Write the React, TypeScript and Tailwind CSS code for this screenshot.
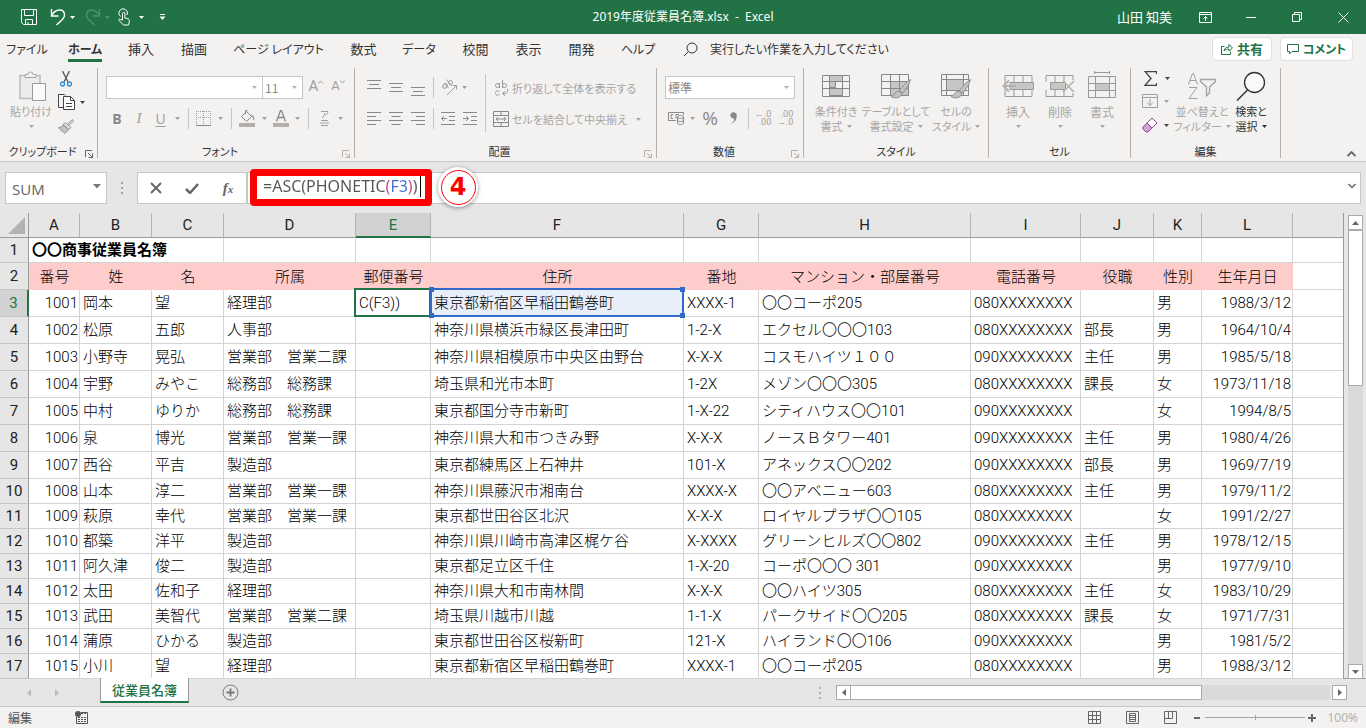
import type { ReactNode } from "react";
import clsx from "clsx";

const uiFont = "font-['Noto_Sans_CJK_JP',sans-serif] [font-feature-settings:'palt']";
const cellFont = "font-[Roboto,'Noto_Sans_CJK_JP',sans-serif] [font-feature-settings:normal]";

const tabs = [
  { label: "ファイル", width: "w-[54px]", size: "text-[12px]" },
  { label: "ホーム", width: "w-[62px]", size: "text-[12px]", active: true },
  { label: "挿入", width: "w-[50px]", size: "text-[13px]" },
  { label: "描画", width: "w-[56px]", size: "text-[13px]" },
  { label: "ページ レイアウト", width: "w-[113px]", size: "text-[12px]" },
  { label: "数式", width: "w-[57px]", size: "text-[13px]" },
  { label: "データ", width: "w-[54px]", size: "text-[12px]" },
  { label: "校閲", width: "w-[59px]", size: "text-[13px]" },
  { label: "表示", width: "w-[47px]", size: "text-[13px]" },
  { label: "開発", width: "w-[59px]", size: "text-[13px]" },
  { label: "ヘルプ", width: "w-[54px]", size: "text-[12px]" },
];

const columns = [
  { name: "A", width: "w-[51px]" },
  { name: "B", width: "w-[72px]" },
  { name: "C", width: "w-[72px]" },
  { name: "D", width: "w-[132px]" },
  { name: "E", width: "w-[75px]" },
  { name: "F", width: "w-[253px]" },
  { name: "G", width: "w-[75px]" },
  { name: "H", width: "w-[212px]" },
  { name: "I", width: "w-[110px]" },
  { name: "J", width: "w-[73px]" },
  { name: "K", width: "w-[48px]" },
  { name: "L", width: "w-[91px]" },
];

const fields = ["番号", "姓", "名", "所属", "郵便番号", "住所", "番地", "マンション・部屋番号", "電話番号", "役職", "性別", "生年月日"];

const employees = [
  ["1001", "岡本", "望", "経理部", "C(F3))", "東京都新宿区早稲田鶴巻町", "XXXX-1", "〇〇コーポ205", "080XXXXXXXX", "", "男", "1988/3/12"],
  ["1002", "松原", "五郎", "人事部", "", "神奈川県横浜市緑区長津田町", "1-2-X", "エクセル〇〇〇103", "080XXXXXXXX", "部長", "男", "1964/10/4"],
  ["1003", "小野寺", "晃弘", "営業部　営業二課", "", "神奈川県相模原市中央区由野台", "X-X-X", "コスモハイツ１００", "090XXXXXXXX", "主任", "男", "1985/5/18"],
  ["1004", "宇野", "みやこ", "総務部　総務課", "", "埼玉県和光市本町", "1-2X", "メゾン〇〇〇305", "080XXXXXXXX", "課長", "女", "1973/11/18"],
  ["1005", "中村", "ゆりか", "総務部　総務課", "", "東京都国分寺市新町", "1-X-22", "シティハウス〇〇101", "090XXXXXXXX", "", "女", "1994/8/5"],
  ["1006", "泉", "博光", "営業部　営業一課", "", "神奈川県大和市つきみ野", "X-X-X", "ノースＢタワー401", "090XXXXXXXX", "主任", "男", "1980/4/26"],
  ["1007", "西谷", "平吉", "製造部", "", "東京都練馬区上石神井", "101-X", "アネックス〇〇202", "090XXXXXXXX", "部長", "男", "1969/7/19"],
  ["1008", "山本", "淳二", "営業部　営業一課", "", "神奈川県藤沢市湘南台", "XXXX-X", "〇〇アベニュー603", "080XXXXXXXX", "主任", "男", "1979/11/2"],
  ["1009", "萩原", "幸代", "営業部　営業一課", "", "東京都世田谷区北沢", "X-X-X", "ロイヤルプラザ〇〇105", "080XXXXXXXX", "", "女", "1991/2/27"],
  ["1010", "都築", "洋平", "製造部", "", "神奈川県川崎市高津区梶ケ谷", "X-XXXX", "グリーンヒルズ〇〇802", "090XXXXXXXX", "主任", "男", "1978/12/15"],
  ["1011", "阿久津", "俊二", "製造部", "", "東京都足立区千住", "1-X-20", "コーポ〇〇〇 301", "090XXXXXXXX", "", "男", "1977/9/10"],
  ["1012", "太田", "佐和子", "経理部", "", "神奈川県大和市南林間", "X-X-X", "〇〇ハイツ305", "080XXXXXXXX", "主任", "女", "1983/10/29"],
  ["1013", "武田", "美智代", "営業部　営業二課", "", "埼玉県川越市川越", "1-1-X", "パークサイド〇〇205", "080XXXXXXXX", "課長", "女", "1971/7/31"],
  ["1014", "蒲原", "ひかる", "製造部", "", "東京都世田谷区桜新町", "121-X", "ハイランド〇〇106", "090XXXXXXXX", "", "男", "1981/5/2"],
  ["1015", "小川", "望", "経理部", "", "東京都新宿区早稲田鶴巻町", "XXXX-1", "〇〇コーポ205", "080XXXXXXXX", "", "男", "1988/3/12"],
];

type IconProps = { w: number; h: number; className?: string; children: ReactNode };

function Icon({ w, h, className, children }: IconProps) {
  return (
    <svg width={w} height={h} viewBox={`0 0 ${w} ${h}`} fill="none" stroke="currentColor" className={clsx("shrink-0", className)} aria-hidden="true">
      {children}
    </svg>
  );
}

function Caret({ className }: { className?: string }) {
  return (
    <Icon w={5} h={3} className={className}>
      <path d="M0 0h5L2.5 3z" fill="currentColor" stroke="none" />
    </Icon>
  );
}

type ToolProps = { label: string; width?: string; className?: string; children: ReactNode };

function Tool({ label, width = "w-[22px]", className, children }: ToolProps) {
  return (
    <button type="button" aria-label={label} className={clsx("flex shrink-0 items-center justify-center", width, className)}>
      {children}
    </button>
  );
}

function CaretTool({ label, width = "w-[11px]", className }: { label: string; width?: string; className?: string }) {
  return (
    <Tool label={label} width={width} className={className}>
      <Caret />
    </Tool>
  );
}

function Divider({ width = "w-[10px]" }: { width?: string }) {
  return (
    <span className={clsx("flex shrink-0 justify-center", width)}>
      <span className="h-[21px] w-px bg-[#c8c6c4]" />
    </span>
  );
}

type GroupProps = { title: string; width: string; launcher?: "dark" | "dim"; children: ReactNode };

function Group({ title, width, launcher, children }: GroupProps) {
  return (
    <section className={clsx("flex h-[90px] shrink-0 flex-col border-r border-[#b3b0ad]", width)}>
      <div className="h-[77px]">{children}</div>
      <div className="flex h-[13px] items-center">
        <h2 className="flex-1 whitespace-nowrap text-center text-[11px] leading-[13px] text-[#333]">{title}</h2>
        {launcher && (
          <button type="button" aria-label={`${title}の設定`} className={clsx("mr-1 mt-1", launcher === "dark" ? "text-[#666]" : "text-[#b3b0ad]")}>
            <Icon w={8} h={8}>
              <path d="M.5 7V.5H7M3 3l4 4M7.500 3.500v4h-4" />
            </Icon>
          </button>
        )}
      </div>
    </section>
  );
}

type DropProps = { label: string; value: string; width: string; className?: string };

function Drop({ label, value, width, className }: DropProps) {
  return (
    <div className={clsx("relative shrink-0", width)}>
      <select
        aria-label={label}
        defaultValue={value}
        className={clsx("block h-[23px] w-full appearance-none border border-[#c8c6c4] bg-white pl-0.5 text-[12px] leading-5 text-[#888]", className)}
      >
        <option>{value}</option>
      </select>
      <Caret className="pointer-events-none absolute right-1.5 top-2.5 text-[#b3b0ad]" />
    </div>
  );
}

type BigButtonProps = { icon: ReactNode; lines: string[]; width: string; size?: string; color?: string };

function BigButton({ icon, lines, width, size = "text-[11px]", color }: BigButtonProps) {
  const single = lines.length === 1;
  return (
    <button type="button" className={clsx("flex shrink-0 flex-col items-center whitespace-nowrap leading-[15px]", width, size, color)}>
      <span className="flex h-9 items-center justify-center">{icon}</span>
      <span>{lines[0]}</span>
      {single ? (
        <Caret className="mt-1.5" />
      ) : (
        <span className="flex items-center gap-1">
          {lines[1]}
          <Caret />
        </span>
      )}
    </button>
  );
}

function TitleBar() {
  return (
    <header className="flex h-[34px] items-center bg-[#217346] text-[13px] text-white">
      <div className="flex flex-1 items-center">
        <Tool label="上書き保存" className="ml-[18px]">
          <Icon w={16} h={16}>
            <path d="M.5.5h15v15h-13l-2-2zM3.500.5v6h9v-6M4.500 15.500v-5h7v5M7 13v2.500" />
          </Icon>
        </Tool>
        <Tool label="元に戻す" width="w-6" className="ml-1.5">
          <Icon w={16} h={18}>
            <path d="M1.500 1v7h7M1.500 8c2-4 5-6 8-6 3 0 5 2 5 5 0 4-4 6-8 10" strokeWidth="1.400" />
          </Icon>
        </Tool>
        <CaretTool label="元に戻すの一覧" width="w-[5px]" />
        <Tool label="やり直し" width="w-6" className="ml-1.5 text-[#4d9069]">
          <Icon w={16} h={18}>
            <path d="M14.500 1v7h-7M14.500 8c-2-4-5-6-8-6-3 0-5 2-5 5 0 4 4 6 8 10" strokeWidth="1.400" />
          </Icon>
        </Tool>
        <CaretTool label="やり直しの一覧" width="w-[5px]" className="text-[#4d9069]" />
        <Tool label="タッチ/マウス モードの切り替え" width="w-6" className="ml-0.5">
          <Icon w={12} h={18}>
            <path d="M2.500 8.500A4.300 4.300 0 1 1 9 7M4.500 12V5.500a1.200 1.200 0 0 1 2.400 0V10l3 .8c1 .3 1.600.8 1.500 2l-.8 4.200H5.500L1 12.500c-.6-1 .6-1.800 1.500-1z" />
          </Icon>
        </Tool>
        <CaretTool label="モードの一覧" />
        <Tool label="クイック アクセス ツール バーのユーザー設定" width="w-[30px]">
          <Icon w={7} h={6}>
            <path d="M1 .5h5" />
            <path d="M.5 2.500h6l-3 3.500z" fill="currentColor" stroke="none" />
          </Icon>
        </Tool>
      </div>
      <h1 className="whitespace-pre font-['Noto_Sans','Noto_Sans_CJK_JP',sans-serif] text-[12px] leading-4">2019年度従業員名簿.xlsx  -  Excel</h1>
      <div className="flex flex-1 items-center justify-end">
        <span className="mr-2.5 whitespace-nowrap">山田 知美</span>
        <Tool label="リボンの表示オプション" width="w-[46px]">
          <Icon w={13} h={11}>
            <path d="M.5.5h12v10H.5zM.5 2.500h12M6.500 9V4.500M4.500 6.500l2-2 2 2" />
          </Icon>
        </Tool>
        <Tool label="最小化" width="w-[46px]">
          <Icon w={10} h={1}>
            <path d="M0 .5h10" />
          </Icon>
        </Tool>
        <Tool label="元に戻す (縮小)" width="w-[46px]">
          <Icon w={10} h={10}>
            <path d="M.5 2.500h7v7h-7zM2.500 2.500v-2h7v7h-2" />
          </Icon>
        </Tool>
        <Tool label="閉じる" width="w-[46px]">
          <Icon w={11} h={11}>
            <path d="M.5.5l10 10M10.500.5l-10 10" />
          </Icon>
        </Tool>
      </div>
    </header>
  );
}

function TabRow() {
  return (
    <nav className="flex h-[30px] items-center leading-5 text-[#333]">
      {tabs.map((tab) => (
        <button
          key={tab.label}
          type="button"
          className={clsx("flex h-full shrink-0 items-center justify-center whitespace-nowrap", tab.width, tab.size, tab.active && "font-bold")}
        >
          <span className={clsx("border-b-[3px] pt-0.5", tab.active ? "border-[#217346]" : "border-transparent")}>{tab.label}</span>
        </button>
      ))}
      <button type="button" className="ml-[18px] flex items-center gap-3 whitespace-nowrap text-[12px]">
        <Icon w={15} h={15}>
          <circle cx="9" cy="6" r="5" />
          <path d="M5.500 9.500L1 14" />
        </Icon>
        実行したい作業を入力してください
      </button>
      <div className="ml-auto mr-[13px] flex gap-2 font-bold text-[#217346]">
        <button type="button" className="flex h-6 w-[60px] items-center justify-center gap-1 rounded-sm border border-[#e1dfdd] bg-white text-[13px]">
          <Icon w={12} h={12}>
            <path d="M3.500 3.500h-3v8h9v-3M3 8c.5-3 2.500-4 5-4V1.500L11.500 5 8 8V6C6 6 4.500 6.500 3 8z" />
          </Icon>
          共有
        </button>
        <button type="button" className="flex h-6 w-[73px] items-center justify-center gap-1 whitespace-nowrap rounded-sm border border-[#e1dfdd] bg-white text-[12px]">
          <Icon w={12} h={11}>
            <path d="M.5.500h11v7H5l-2.500 2.500V7.500h-2z" />
          </Icon>
          コメント
        </button>
      </div>
    </nav>
  );
}

function ClipboardGroup() {
  return (
    <Group title="クリップボード" width="w-[98px]" launcher="dark">
      <div className="flex pl-1.5">
        <BigButton
          width="w-[50px]"
          color="text-[#a8a6a4]"
          lines={["貼り付け"]}
          icon={
            <Icon w={28} h={30} className="ml-1">
              <path d="M1 4.500h20v23H1z" fill="#ececec" stroke="#bdbbb9" strokeWidth="1.500" />
              <path d="M6 6.500v-3h3a2.500 2.500 0 0 1 5 0h3v3z" fill="#f3f2f1" />
              <path d="M13.500 12.500h13v17h-13z" fill="#fafafa" stroke="#999" />
            </Icon>
          }
        />
        <div className="-ml-px flex flex-col pt-0.5">
          <Tool label="切り取り" className="h-[18px]">
            <Icon w={12} h={16}>
              <path d="M2.500 0l5.500 11M9.500 0L4 11" stroke="#555" strokeWidth="1.300" />
              <circle cx="2.500" cy="13" r="2" stroke="#2b88d8" strokeWidth="1.300" />
              <circle cx="9.500" cy="13" r="2" stroke="#2b88d8" strokeWidth="1.300" />
            </Icon>
          </Tool>
          <div className="flex h-7 items-center text-[#444]">
            <Tool label="コピー">
              <Icon w={17} h={16}>
                <path d="M6 13.500H.5V.5h6l1 1" />
                <path d="M5.500 2.500h7l4 4v9h-11z" fill="#fff" />
                <path d="M12.500 2.500v4h4M8 9.500h6M8 12.500h6" />
              </Icon>
            </Tool>
            <CaretTool label="コピーの種類" />
          </div>
          <Tool label="書式のコピー/貼り付け" className="h-5 text-[#999]">
            <Icon w={16} h={15}>
              <path d="M14.500.5l1 1.500-4 4-1.500-1.500zM7.500 3.500l5.500 5-2 2L5 5.500z" fill="#ddd" />
              <path d="M5 6l5.500 5L7 14.500C5 13 2.500 11.500.5 8.500 2.500 8.500 4 7.500 5 6z" fill="#c4c2c0" />
            </Icon>
          </Tool>
        </div>
      </div>
    </Group>
  );
}

function FontGroup() {
  return (
    <Group title="フォント" width="w-[257px]" launcher="dim">
      <div className="flex flex-col pl-2 text-[#a19f9d]">
        <div className="mt-2 flex h-[23px]">
          <Drop label="フォント名" value="" width="w-[157px]" />
          <Drop label="フォント サイズ" value="11" width="w-[40px]" className="border-l-0" />
          <Tool label="フォント サイズの拡大" className="ml-0.5 h-5">
            <span className="font-[Roboto] text-[15px]">A</span>
            <Icon w={5} h={4} className="mb-2">
              <path d="M.5 3.500l2-2.500 2 2.500" />
            </Icon>
          </Tool>
          <Tool label="フォント サイズの縮小" className="h-5">
            <span className="font-[Roboto] text-[13px]">A</span>
            <Icon w={5} h={4} className="mb-2">
              <path d="M.5.500l2 2.500 2-2.500" />
            </Icon>
          </Tool>
        </div>
        <div className="mt-[7px] flex h-6 items-center font-['Open_Sans'] text-[14px]">
          <Tool label="太字">
            <span className="font-bold text-[#8a8886]">B</span>
          </Tool>
          <Tool label="斜体">
            <span className="font-['Liberation_Serif'] text-[15px] italic">I</span>
          </Tool>
          <Tool label="下線" width="w-[21px]">
            <span className="underline underline-offset-2">U</span>
          </Tool>
          <CaretTool label="下線の種類" width="w-[13px]" />
          <Divider width="w-2" />
          <Tool label="罫線" width="w-[23px]">
            <Icon w={15} h={15}>
              <path d="M.5 0v13M7.500 0v13M14.500 0v13M0 .5h15M0 6.500h15" strokeDasharray="1 1" />
              <path d="M0 14.500h15" stroke="#888" />
            </Icon>
          </Tool>
          <CaretTool label="罫線の種類" />
          <Divider />
          <Tool label="塗りつぶしの色">
            <Icon w={16} h={17}>
              <path d="M7.500 1.500l5 5-5 5-5-5zM6.500 4V1a1 1 0 0 1 2 0" stroke="#8a8886" />
              <path d="M12.500 5c2 1 2.500 3 2 5" strokeWidth="1.500" />
              <path d="M0 15h16" stroke="#b3aeaa" strokeWidth="4" />
            </Icon>
          </Tool>
          <CaretTool label="塗りつぶしの色の一覧" width="w-3" />
          <Tool label="フォントの色">
            <Icon w={16} h={17}>
              <path d="M3.500 11.500l4-11h1l4 11M5 7.500h6" strokeWidth="1.300" stroke="#8a8886" />
              <path d="M0 15h16" stroke="#b3aeaa" strokeWidth="4" />
            </Icon>
          </Tool>
          <CaretTool label="フォントの色の一覧" />
          <Divider />
          <Tool label="ふりがなの表示">
            <Icon w={9} h={17}>
              <path d="M1 1.500h7c0 2-1 3-2.500 3.500M4.500 3c0 2-.5 4-2.500 5M1 10.500h7M0 13h9M1 15.500h7" />
            </Icon>
          </Tool>
          <CaretTool label="ふりがなの設定" />
        </div>
      </div>
    </Group>
  );
}

function Lines({ d }: { d: string }) {
  return (
    <Icon w={14} h={17} className="text-[#8a8886]">
      <path d={d} />
    </Icon>
  );
}

function AlignGroup() {
  return (
    <Group title="配置" width="w-[302px]" launcher="dim">
      <div className="flex pl-2 text-[#a19f9d]">
        <div className="pt-[7px]">
          <div className="flex h-6 items-center">
            <Tool label="上揃え">
              <Lines d="M0 1.500h14M2 5.500h10M0 9.500h14" />
            </Tool>
            <Tool label="上下中央揃え">
              <Lines d="M0 4.500h14M2 8.500h10M0 12.500h14" />
            </Tool>
            <Tool label="下揃え">
              <Lines d="M0 8.500h14M2 12.500h10M0 16.500h14" />
            </Tool>
            <Divider width="w-2" />
            <Tool label="方向" width="w-6">
              <Icon w={17} h={17}>
                <path d="M6 16L15.500 6.500M11.500 6.500h4v4" />
                <ellipse cx="4" cy="7" rx="2.500" ry="2" transform="rotate(-45 4 7)" />
                <path d="M4 4.500l3.500 4.500M5.500.5l5 6.500" />
                <circle cx="9.500" cy="3.500" r="2" />
              </Icon>
            </Tool>
            <CaretTool label="方向の一覧" width="w-1.5" />
          </div>
          <div className="mt-[7px] flex h-6 items-center">
            <Tool label="左揃え">
              <Lines d="M0 2.500h14M0 6.500h9M0 10.500h14M0 14.500h9" />
            </Tool>
            <Tool label="中央揃え">
              <Lines d="M0 2.500h14M2.500 6.500h9M0 10.500h14M2.500 14.500h9" />
            </Tool>
            <Tool label="右揃え">
              <Lines d="M0 2.500h14M5 6.500h9M0 10.500h14M5 14.500h9" />
            </Tool>
            <Divider width="w-2" />
            <Tool label="インデントを減らす">
              <Lines d="M0 2.500h14M8 6.500h6M8 10.500h6M0 14.500h14M6 8.500H.5M3 6L.5 8.500 3 11" />
            </Tool>
            <Tool label="インデントを増やす">
              <Lines d="M0 2.500h14M8 6.500h6M8 10.500h6M0 14.500h14M0 8.500h5.500M3 6l2.500 2.500L3 11" />
            </Tool>
          </div>
        </div>
        <span className="ml-1 mt-1.5 h-[58px] w-px bg-[#c8c6c4]" />
        <div className="ml-[7px] whitespace-nowrap pt-2 text-[11px] text-[#a8a6a4]">
          <button type="button" className="flex h-6 items-center gap-[3px]">
            <Icon w={16} h={17} className="text-[#999]">
              <circle cx="4.500" cy="5.500" r="2" />
              <path d="M6.500 3v5M9.500 0v8M6.500 11.500c-3-1.500-4 0-4 1.500s1 3 4 1.500M14.500 9v2.500c0 1.500-1 2-5 2M12 11l-2.500 2.500L12 16" />
              <circle cx="11.500" cy="5.500" r="2" />
            </Icon>
            折り返して全体を表示する
          </button>
          <button type="button" className="mt-[7px] flex h-6 items-center gap-[3px]">
            <Icon w={16} h={16} className="text-[#8a8886]">
              <path d="M.5.5h15v15H.5zM.5 4.500h15M.5 11.500h15M8 .5v4M8 11.500v4M3 8h10M5 6L3 8l2 2M11 6l2 2-2 2" />
            </Icon>
            セルを結合して中央揃え
            <Caret className="ml-1.5" />
          </button>
        </div>
      </div>
    </Group>
  );
}

function NumberGroup() {
  return (
    <Group title="数値" width="w-[147px]" launcher="dim">
      <div className="flex flex-col px-2 pt-2 text-[#a19f9d]">
        <Drop label="表示形式" value="標準" width="w-full" />
        <div className="mt-[7px] flex h-6 items-center">
          <Tool label="通貨表示形式">
            <Icon w={17} h={14} className="text-[#8a8886]">
              <path d="M8 9.500H.5v-8h15V4M5 3.500H3v4h2M8 7.500v-4h3" />
              <path d="M9.500 6v6c0 2 6 2 6 0V6c0-2-6-2-6 0zm0 0c0 2 6 2 6 0M9.500 9c0 2 6 2 6 0" fill="#eee" />
            </Icon>
          </Tool>
          <CaretTool label="通貨の一覧" />
          <Tool label="パーセント スタイル" width="w-6">
            <span className="font-['Open_Sans'] text-[19px] leading-6 text-[#8a8886]">%</span>
          </Tool>
          <Tool label="桁区切りスタイル">
            <Icon w={8} h={12} className="text-[#8a8886]">
              <path d="M1 12c3-1.500 4.500-3 4-5.500A3.200 3.200 0 1 1 7.700 4C8 8 5 11 1 12z" fill="currentColor" stroke="none" />
            </Icon>
          </Tool>
          <Divider width="w-2" />
          <Tool label="小数点以下の表示桁数を増やす">
            <span className="text-right font-[Roboto] text-[9px] leading-[8px]">←.0<br />.00</span>
          </Tool>
          <Tool label="小数点以下の表示桁数を減らす">
            <span className="text-right font-[Roboto] text-[9px] leading-[8px]">.00<br />→.0</span>
          </Tool>
        </div>
      </div>
    </Group>
  );
}

function Brush() {
  return <path d="M29.500 7.500c-4 2-8 7-11 11l3 3c3-4 7-9 8-14zM18 19c-4 0-4 4-8 5.500 4 2.500 10 1.500 11-3z" fill="#c4c2c0" stroke="#8f8d8b" />;
}

function StyleGroup() {
  return (
    <Group title="スタイル" width="w-[185px]">
      <div className="flex pl-1 text-[#a8a6a4]">
        <BigButton
          width="w-14"
          lines={["条件付き", "書式"]}
          icon={
            <Icon w={28} h={28} className="text-[#8a8886]">
              <path d="M7.500 3.500h13v6h-13zM7.500 9.500h6v6h-6zM7.500 16.500h13v7h-13z" fill="#c8c6c4" />
              <path d="M.5 3.500h27v21H.5zM.5 9.500h27M.5 16.500h27M7.500 3v21M20.500 3v21" />
            </Icon>
          }
        />
        <BigButton
          width="w-16"
          lines={["テーブルとして", "書式設定"]}
          icon={
            <Icon w={31} h={28} className="text-[#8a8886]">
              <path d="M9.500 9.500h18v14h-18z" fill="#c8c6c4" />
              <path d="M.5 2.500h27v21H.5zM.5 9.500h27M.5 16.500h27M9.500 2v21M18.500 2v21" />
              <Brush />
            </Icon>
          }
        />
        <BigButton
          width="w-14"
          lines={["セルの", "スタイル"]}
          icon={
            <Icon w={31} h={28} className="text-[#8a8886]">
              <path d="M5.500 7.500h17v11h-17z" fill="#c8c6c4" />
              <path d="M.5 2.500h27v21H.5zM.5 7.500h27M.5 18.500h27M5.500 2v21M22.500 2v21" />
              <Brush />
            </Icon>
          }
        />
      </div>
    </Group>
  );
}

function CellGroup() {
  return (
    <Group title="セル" width="w-[142px]">
      <div className="flex pl-2 text-[#a8a6a4]">
        <BigButton
          width="w-[42px]"
          size="text-[12px]"
          lines={["挿入"]}
          icon={
            <Icon w={32} h={28} className="text-[#999]">
              <path d="M3 3.500h27v21H3zM12 3v21M21 3v21" />
              <path d="M8 10.500h23.500v7H8z" fill="#c8c6c4" />
              <path d="M14 14H1.500M7 8.500L1.500 14 7 19.500" stroke="#b3b0ad" strokeWidth="2" />
            </Icon>
          }
        />
        <BigButton
          width="w-[42px]"
          size="text-[12px]"
          lines={["削除"]}
          icon={
            <Icon w={30} h={28} className="text-[#999]">
              <path d="M1 10V3.500h27V8M1 18v6.500h27V21M10 3v7M19 3v7M10 18v6M19 18v6" />
              <path d="M5.500 10.500h15v7h-15z" fill="#c8c6c4" />
              <path d="M18 9l11 11M29 9L18 20" stroke="#b3b0ad" strokeWidth="1.500" />
            </Icon>
          }
        />
        <BigButton
          width="w-[42px]"
          size="text-[12px]"
          lines={["書式"]}
          icon={
            <Icon w={28} h={32} className="text-[#999]">
              <path d="M.5 6.500h27v21H.5zM.5 13.500h27M.5 20.500h27M7.500 6v21M21.500 6v21M6.500 1v3M21.500 1v3M6.500 2.500h15" />
              <path d="M7.500 13.500h14v7h-14z" fill="#c8c6c4" />
            </Icon>
          }
        />
      </div>
    </Group>
  );
}

function EditGroup() {
  return (
    <Group title="編集" width="w-[150px]">
      <div className="flex pl-2">
        <div className="flex w-[34px] shrink-0 flex-col text-[#444]">
          <div className="flex h-[21px] items-center">
            <Tool label="合計">
              <Icon w={13} h={15}>
                <path d="M12.500 3V.5H1L7 7.500.8 14.500h11.700V12" strokeWidth="1.300" />
              </Icon>
            </Tool>
            <CaretTool label="集計の種類" width="w-3" />
          </div>
          <div className="flex h-6 items-center text-[#a19f9d]">
            <Tool label="フィル">
              <Icon w={16} h={14}>
                <path d="M.5.5h15v13H.5zM.5 3.500h15M8 5v6.500M5 8.500l3 3 3-3" />
              </Icon>
            </Tool>
            <CaretTool label="フィルの種類" />
          </div>
          <div className="flex h-6 items-center">
            <Tool label="クリア">
              <Icon w={16} h={16} className="text-[#9b3fa5]">
                <path d="M10 1l5 5-5 5-5-5z" fill="#fff" />
                <path d="M5 6l5 5-4 4H4L1 12v-2z" fill="#d3a3d8" />
              </Icon>
            </Tool>
            <CaretTool label="クリアの種類" />
          </div>
        </div>
        <BigButton
          width="w-[58px]"
          color="text-[#a8a6a4]"
          lines={["並べ替えと", "フィルター"]}
          icon={
            <Icon w={28} h={28} className="text-[#a3a19f]">
              <path d="M.5 12.500l4-11h1l4 11M2 8.500h6M1 15.500h8l-8 11h8.500" />
              <path d="M12.500 7.500h15v2L21.500 15v6l-3 3v-9l-6-5.500z" strokeWidth="1.300" />
            </Icon>
          }
        />
        <BigButton
          width="w-[40px]"
          color="text-[#333]"
          lines={["検索と", "選択"]}
          icon={
            <Icon w={30} h={30}>
              <circle cx="18.500" cy="11.500" r="10" fill="#fafafa" strokeWidth="1.300" />
              <path d="M11.500 19L1 29.500" strokeWidth="1.500" />
            </Icon>
          }
        />
      </div>
    </Group>
  );
}

function FormulaBar() {
  return (
    <div className="flex items-center border-t border-[#c6c6c6] bg-[#e6e6e6] px-[5px] pb-[9px] pt-[10px]">
      <div className="relative">
        <input
          aria-label="名前ボックス"
          defaultValue="SUM"
          className="block h-8 w-[102px] border border-[#c6c6c6] bg-white pl-1.5 pt-0.5 font-['Open_Sans'] text-[15px] text-[#666]"
        />
        <button type="button" aria-label="名前の一覧" className="absolute right-1.5 top-3 text-[#777]">
          <svg width="8" height="5" viewBox="0 0 8 5" aria-hidden="true">
            <path d="M0 0h8L4 4.500z" fill="currentColor" />
          </svg>
        </button>
      </div>
      <span className="flex w-[30px] justify-center text-[#a0a0a0]">
        <Icon w={2} h={12}>
          <path d="M1 0v12" strokeWidth="2" strokeDasharray="2 3" />
        </Icon>
      </span>
      <div className="flex h-8 w-[110px] items-center justify-center border border-[#c6c6c6] bg-white text-[#666]">
        <Tool label="キャンセル" width="w-9">
          <Icon w={12} h={12}>
            <path d="M1 1l10 10M11 1L1 11" strokeWidth="2" />
          </Icon>
        </Tool>
        <Tool label="入力" width="w-9">
          <Icon w={14} h={11}>
            <path d="M1 6l4 4L13 1" strokeWidth="2.500" />
          </Icon>
        </Tool>
        <Tool label="関数の挿入" width="w-9">
          <span className="font-['Liberation_Serif'] text-[15px] font-bold italic leading-5">
            f<span className="text-[11px]">x</span>
          </span>
        </Tool>
      </div>
      <div className="relative flex h-8 flex-1 items-center border border-[#c6c6c6] bg-white pb-1 pl-[15px]">
        <input
          aria-label="数式バー"
          defaultValue="=ASC(PHONETIC(F3))"
          className="w-[157px] bg-[linear-gradient(90deg,#555_0_122px,#c0478f_122px_127px,#3b6fd1_127px_145px,#c0478f_145px_150px,#555_150px)] bg-clip-text font-['Noto_Sans',sans-serif] text-[16px] leading-6 text-transparent"
        />
        <span className="h-[22px] w-px bg-black" />
        <div className="pointer-events-none absolute left-[2px] top-[-4px] h-[37px] w-[182px] rounded border-[7px] border-[#fe0000]" />
        <div className="absolute left-[190px] top-[-6px] flex size-10 items-center justify-center rounded-full bg-white shadow-[0_1px_4px_rgba(0,0,0,0.4)]">
          <span className="flex size-[35px] items-center justify-center rounded-full border border-[#fe0000] font-['DejaVu_Sans'] text-[24px] font-bold leading-8 text-[#fe0000]">
            4
          </span>
        </div>
        <button type="button" aria-label="数式バーの展開" className="ml-auto mr-1 text-[#666]">
          <Icon w={8} h={6}>
            <path d="M.5 1L4 4.500 7.500 1" strokeWidth="1.500" />
          </Icon>
        </button>
      </div>
    </div>
  );
}

function Handles() {
  const spots = ["left-[-3px] top-[-3px]", "right-[-3px] top-[-3px]", "left-[-3px] bottom-[-3px]", "right-[-3px] bottom-[-3px]"];
  return (
    <span className="pointer-events-none absolute -left-px -top-0.5 bottom-[-1px] right-[-1px] border-2 border-[#3369c9]">
      {spots.map((spot) => (
        <span key={spot} className={clsx("absolute size-[5px] bg-[#3369c9]", spot)} />
      ))}
    </span>
  );
}

function Sheet() {
  return (
    <table className={clsx("w-full table-fixed border-separate border-spacing-0 border-r border-[#9b9b9b] bg-white text-[15px] leading-5 text-black", cellFont)}>
      <colgroup>
        <col className="w-[29px]" />
        {columns.map((column) => (
          <col key={column.name} className={column.width} />
        ))}
        <col />
      </colgroup>
      <thead>
        <tr className="h-[25px] bg-[#e6e6e6]">
          <th aria-label="すべて選択" className="border-b border-r border-[#9b9b9b] p-0">
            <svg width="17" height="17" viewBox="0 0 17 17" className="ml-auto mr-[3px]" aria-hidden="true">
              <path d="M17 0v17H0z" fill="#b2b2b2" />
            </svg>
          </th>
          {columns.map(({ name }) => (
            <th
              key={name}
              scope="col"
              className={clsx(
                "border-r border-r-[#b4b4b4] p-0 font-normal",
                name === "E" ? "border-b-2 border-b-[#217346] bg-[#d2d2d2] text-[#217346]" : "border-b border-b-[#9b9b9b] text-[#222]",
              )}
            >
              {name}
            </th>
          ))}
          <th aria-label="M" className="border-b border-[#9b9b9b] p-0" />
        </tr>
      </thead>
      <tbody className="font-light">
        <tr className="h-[25px]">
          <RowNumber n={1} />
          <td colSpan={3} className="border-b border-r border-[#d4d4d4] p-0 pl-[3px] font-bold">
            〇〇商事従業員名簿
          </td>
          {columns.slice(3).map(({ name }) => (
            <td key={name} className="border-b border-r border-[#d4d4d4] p-0" />
          ))}
          <td className="border-b border-[#d4d4d4] p-0" />
        </tr>
        <tr className="h-[27px]">
          <RowNumber n={2} />
          {fields.map((field) => (
            <td key={field} className="whitespace-nowrap bg-[#ffcccc] p-0 text-center">
              {field}
            </td>
          ))}
          <td className="border-b border-[#d4d4d4] p-0" />
        </tr>
        {employees.map((employee, index) => {
          const n = index + 3;
          return (
            <tr key={n} className={n < 10 ? "h-[27px]" : "h-[25px]"}>
              <RowNumber n={n} />
              {employee.map((value, i) => {
                const { name } = columns[i];
                const editing = n === 3 && name === "E";
                const source = n === 3 && name === "F";
                return (
                  <td
                    key={name}
                    className={clsx(
                      "whitespace-nowrap border-b border-r border-[#d4d4d4] p-0",
                      name === "A" || name === "L" ? "pr-px text-right" : "pl-[3px]",
                      (editing || source) && "relative",
                      source && "bg-[#e8effa]",
                    )}
                  >
                    {value}
                    {editing && <span className="pointer-events-none absolute -left-0.5 -top-0.5 bottom-[-1px] right-[-1px] border-2 border-[#217346]" />}
                    {source && <Handles />}
                  </td>
                );
              })}
              <td className="border-b border-[#d4d4d4] p-0" />
            </tr>
          );
        })}
      </tbody>
    </table>
  );
}

function RowNumber({ n }: { n: number }) {
  return (
    <th
      scope="row"
      className={clsx(
        "border-b border-b-[#c6c6c6] p-0 text-center font-normal",
        n === 3 ? "border-r-2 border-r-[#217346] bg-[#d2d2d2] text-[#217346]" : "border-r border-r-[#9b9b9b] bg-[#e6e6e6] text-[#222]",
      )}
    >
      {n}
    </th>
  );
}

function VerticalScroll() {
  return (
    <div className="flex w-[22px] shrink-0 flex-col pl-1 pr-[3px] pt-0.5 text-[#666]">
      <button type="button" aria-label="上へスクロール" className="flex h-[15px] items-center justify-center border border-[#ababab] bg-white">
        <Icon w={7} h={4}>
          <path d="M0 4h7L3.500 0z" fill="currentColor" stroke="none" />
        </Icon>
      </button>
      <div className="flex-1 bg-[#dadada]">
        <div className="h-[156px] border border-[#ababab] bg-white" />
      </div>
      <button type="button" aria-label="下へスクロール" className="flex h-[15px] items-center justify-center border border-[#ababab] bg-white">
        <Icon w={7} h={4}>
          <path d="M0 0h7L3.500 4z" fill="currentColor" stroke="none" />
        </Icon>
      </button>
    </div>
  );
}

function SheetTabs() {
  return (
    <div className="flex h-7 border-b border-[#c6c6c6] bg-[#e6e6e6]">
      <div className="flex w-[100px] items-center pl-[15px] text-[#bbb]">
        <Tool label="前のシート" width="w-7">
          <Icon w={4} h={8}>
            <path d="M4 0v8L0 4z" fill="currentColor" stroke="none" />
          </Icon>
        </Tool>
        <Tool label="次のシート" width="w-7">
          <Icon w={4} h={8}>
            <path d="M0 0v8l4-4z" fill="currentColor" stroke="none" />
          </Icon>
        </Tool>
      </div>
      <button
        type="button"
        className="-mt-px mb-[3px] w-[89px] border-x border-b-2 border-x-[#9b9b9b] border-b-[#217346] bg-white text-[13px] font-medium leading-5 text-[#217346]"
      >
        従業員名簿
      </button>
      <Tool label="新しいシート" width="w-[82px]" className="text-[#777]">
        <Icon w={17} h={17}>
          <circle cx="8.500" cy="8.500" r="7.500" />
          <path d="M4.500 8.500h8M8.500 4.500v8" strokeWidth="1.800" />
        </Icon>
      </Tool>
      <div className="ml-auto mr-[19px] flex h-[15px] self-center text-[#666]">
        <span className="flex w-8 items-center justify-center text-[#b0b0b0]">
          <Icon w={2} h={12}>
            <path d="M1 0v12" strokeWidth="2" strokeDasharray="2 3" />
          </Icon>
        </span>
        <button type="button" aria-label="左へスクロール" className="flex w-[15px] items-center justify-center border border-[#ababab] bg-white">
          <Icon w={4} h={7}>
            <path d="M4 0v7L0 3.500z" fill="currentColor" stroke="none" />
          </Icon>
        </button>
        <div className="w-[479px] bg-[#dadada]">
          <div className="h-full w-[351px] border border-l-0 border-[#ababab] bg-white" />
        </div>
        <button type="button" aria-label="右へスクロール" className="ml-0.5 flex w-[15px] items-center justify-center border border-[#ababab] bg-white">
          <Icon w={4} h={7}>
            <path d="M0 0v7l4-3.500z" fill="currentColor" stroke="none" />
          </Icon>
        </button>
      </div>
    </div>
  );
}

function StatusBar() {
  return (
    <footer className="flex h-[21px] items-center bg-[#f3f2f1] px-2 text-[12px] leading-4 text-[#555]">
      <span>編集</span>
      <Tool label="マクロの記録" className="ml-[38px]">
        <Icon w={13} h={13}>
          <path d="M6 1.500h6.500v11H1.500V6" />
          <path d="M6 2.500h6M3 6.500h8M3 8.500h8M3 10.500h8" strokeDasharray="2 1" />
          <circle cx="3" cy="3" r="3" fill="currentColor" stroke="none" />
        </Icon>
      </Tool>
      <div className="ml-auto flex items-center text-[#666]">
        <Tool label="標準" width="w-[38px]">
          <Icon w={13} h={13}>
            <path d="M.5.5h12v12H.5zM.5 4.500h12M.5 8.500h12M4.500.5v12M8.500.5v12" />
          </Icon>
        </Tool>
        <Tool label="ページ レイアウト" width="w-[38px]">
          <Icon w={13} h={13}>
            <path d="M.5.5h12v12H.5zM3.500 2.500h6v8h-6zM4 4.500h5M4 6.500h5M4 8.500h5" />
          </Icon>
        </Tool>
        <Tool label="改ページ プレビュー" width="w-[38px]">
          <Icon w={13} h={13}>
            <path d="M.5.5h12v12H.5zM4.500.5v7M8.500.5v7h-8" />
          </Icon>
        </Tool>
        <Tool label="縮小" width="w-4">
          <Icon w={6} h={2}>
            <path d="M0 1h6" strokeWidth="2" />
          </Icon>
        </Tool>
        <input
          type="range"
          aria-label="ズーム"
          min={10}
          max={190}
          defaultValue={100}
          className="h-px w-[100px] appearance-none bg-[#a6a6a6] [&::-webkit-slider-thumb]:h-[5px] [&::-webkit-slider-thumb]:w-px [&::-webkit-slider-thumb]:appearance-none [&::-webkit-slider-thumb]:bg-[#a6a6a6]"
        />
        <Tool label="拡大" width="w-[14px]">
          <Icon w={8} h={8}>
            <path d="M0 4h8M4 0v8" strokeWidth="2" />
          </Icon>
        </Tool>
        <span className="ml-2 font-['Noto_Sans'] text-[#b3b0ad]">100%</span>
      </div>
    </footer>
  );
}

export default function App() {
  return (
    <div className={clsx("min-h-screen bg-[#f3f2f1]", uiFont)}>
      <TitleBar />
      <div className="bg-[#f3f2f1]">
        <TabRow />
        <div className="flex pb-[3px] pt-1">
          <ClipboardGroup />
          <FontGroup />
          <AlignGroup />
          <NumberGroup />
          <StyleGroup />
          <CellGroup />
          <EditGroup />
          <button type="button" aria-label="リボンを折りたたむ" className="mb-px ml-auto mr-2.5 self-end text-[#666]">
            <Icon w={9} h={6}>
              <path d="M.5 5l4-4 4 4" strokeWidth="1.800" />
            </Icon>
          </button>
        </div>
      </div>
      <FormulaBar />
      <main className="flex bg-[#e6e6e6]">
        <Sheet />
        <VerticalScroll />
      </main>
      <div className="-mt-px border-t border-[#9b9b9b]">
        <SheetTabs />
      </div>
      <StatusBar />
    </div>
  );
}
